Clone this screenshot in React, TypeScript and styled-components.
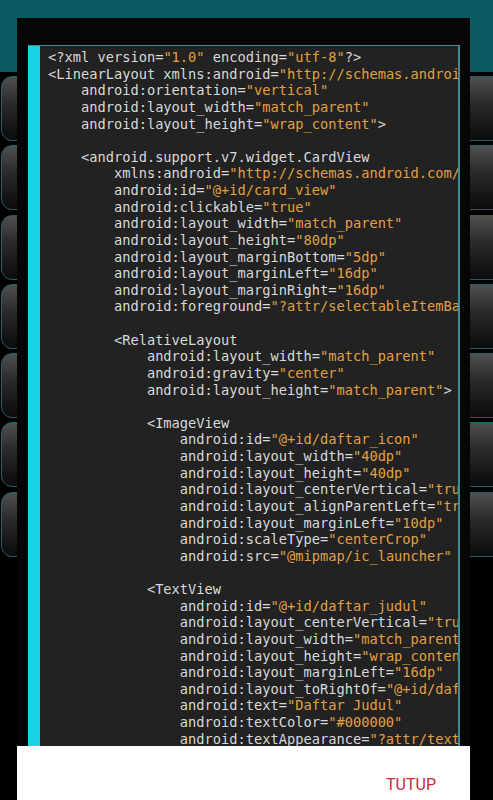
import React from "react";
import styled, { createGlobalStyle } from "styled-components";

const Global = createGlobalStyle`
  html, body { margin: 0; padding: 0; background: #000; overflow: hidden; }
  #root { width: 493px; height: 800px; }
`;

const Screen = styled.div`
  position: relative;
  width: 493px;
  height: 800px;
  background: #000;
  overflow: hidden;
`;

const AppBar = styled.div`
  height: 72px;
  background: #0b5b62;
`;

const ButtonList = styled.div`
  display: flex;
  flex-direction: column;
  gap: 4.3px;
  padding-top: 4px;
`;

const ListButton = styled.div`
  height: 65px;
  margin: 0 -12px 0 1px;
  box-sizing: border-box;
  border-radius: 11px;
  border: 1px solid #245e60;
  background: linear-gradient(180deg, #505050 0%, #2c2c2c 40%, #121212 85%, #0c0c0c 100%);
`;

const Dialog = styled.div`
  position: absolute;
  top: 18px;
  left: 17px;
  width: 453px;
  bottom: 0;
  display: flex;
  flex-direction: column;
  background: #060606;
`;

const DialogTop = styled.div`
  height: 27px;
  flex: none;
`;

const CodePanel = styled.div`
  flex: 1;
  min-height: 0;
  margin: 0 10px 0 11px;
  display: flex;
  background: #222222;
  border-top: 1px solid #3a8d94;
  border-right: 2px solid #3a8d94;
  overflow: hidden;
`;

const AccentBar = styled.div`
  width: 12px;
  flex: none;
  background: #19d2e5;
`;

const Code = styled.pre`
  flex: 1;
  min-width: 0;
  margin: 0;
  padding: 3px 0 0 8px;
  overflow: hidden;
  font-family: "DejaVu Sans Mono", "Liberation Mono", monospace;
  font-size: 13.7px;
  line-height: 16.63px;
  color: #d9d9d9;
  white-space: pre;
`;

const Str = styled.span`
  color: #e3a040;
`;

const Footer = styled.div`
  height: 54px;
  flex: none;
  box-sizing: border-box;
  background: #ffffff;
  display: flex;
  justify-content: flex-end;
  align-items: flex-start;
  padding: 29px 34px 0 0;
`;

const CloseButton = styled.span`
  font-family: Roboto, "Liberation Sans", sans-serif;
  font-size: 16px;
  line-height: 19px;
  color: #c8283c;
`;

const source = `<?xml version="1.0" encoding="utf-8"?>
<LinearLayout xmlns:android="http://schemas.android.com/apk/res/android"
    android:orientation="vertical"
    android:layout_width="match_parent"
    android:layout_height="wrap_content">

    <android.support.v7.widget.CardView
        xmlns:android="http://schemas.android.com/apk/res/android"
        android:id="@+id/card_view"
        android:clickable="true"
        android:layout_width="match_parent"
        android:layout_height="80dp"
        android:layout_marginBottom="5dp"
        android:layout_marginLeft="16dp"
        android:layout_marginRight="16dp"
        android:foreground="?attr/selectableItemBackground">

        <RelativeLayout
            android:layout_width="match_parent"
            android:gravity="center"
            android:layout_height="match_parent">

            <ImageView
                android:id="@+id/daftar_icon"
                android:layout_width="40dp"
                android:layout_height="40dp"
                android:layout_centerVertical="true"
                android:layout_alignParentLeft="true"
                android:layout_marginLeft="10dp"
                android:scaleType="centerCrop"
                android:src="@mipmap/ic_launcher" />

            <TextView
                android:id="@+id/daftar_judul"
                android:layout_centerVertical="true"
                android:layout_width="match_parent"
                android:layout_height="wrap_content"
                android:layout_marginLeft="16dp"
                android:layout_toRightOf="@+id/daftar_icon"
                android:text="Daftar Judul"
                android:textColor="#000000"
                android:textAppearance="?attr/textAppearanceListItem" />`;

function CodeLine({ text }: { text: string }) {
  const parts = text.split(/("[^"]*")/);
  return (
    <>
      {parts.map((p, i) =>
        p.startsWith('"') ? <Str key={i}>{p}</Str> : <React.Fragment key={i}>{p}</React.Fragment>
      )}
      {"\n"}
    </>
  );
}

export default function App() {
  const lines = source.split("\n");
  return (
    <Screen>
      <Global />
      <AppBar />
      <ButtonList>
        {Array.from({ length: 7 }).map((_, i) => (
          <ListButton key={i} />
        ))}
      </ButtonList>
      <Dialog>
        <DialogTop />
        <CodePanel>
          <AccentBar />
          <Code>
            {lines.map((l, i) => (
              <CodeLine key={i} text={l} />
            ))}
          </Code>
        </CodePanel>
        <Footer>
          <CloseButton>TUTUP</CloseButton>
        </Footer>
      </Dialog>
    </Screen>
  );
}
